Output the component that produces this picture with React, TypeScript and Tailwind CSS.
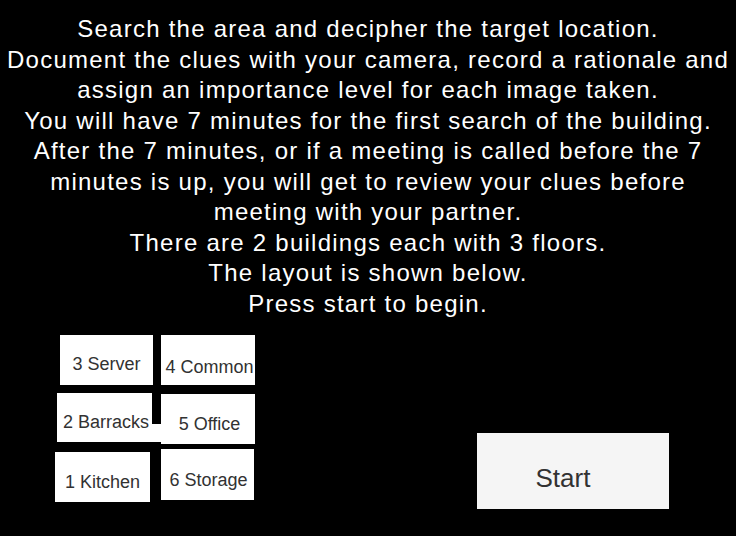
const LINES = [
  "Search the area and decipher the target location.",
  "Document the clues with your camera, record a rationale and",
  "assign an importance level for each image taken.",
  "You will have 7 minutes for the first search of the building.",
  "After the 7 minutes, or if a meeting is called before the 7",
  "minutes is up, you will get to review your clues before",
  "meeting with your partner.",
  "There are 2 buildings each with 3 floors.",
  "The layout is shown below.",
  "Press start to begin.",
];

export default function App() {
  return (
    <div
      className="w-[736px] h-[536px] bg-black overflow-hidden"
      style={{ fontFamily: '"Liberation Sans", Arial, sans-serif' }}
    >
      {/* Instructions */}
      <div className="pt-[14px] text-center text-white text-[24px] leading-[30.5px] tracking-[1.25px]">
        {LINES.map((l) => (
          <div key={l}>{l}</div>
        ))}
      </div>

      <div className="flex mt-[16px]">
        {/* Floor layout */}
        <div className="flex flex-col w-[260px] text-[18px] text-[#323232]">
          <div className="flex">
            <div className="ml-[60px] w-[93px] h-[50px] bg-white flex items-center justify-center pt-[8px]">
              3 Server
            </div>
            <div className="ml-[8px] w-[94px] h-[50px] bg-white flex items-center justify-center pt-[14px] pl-[3px]">
              4 Common
            </div>
          </div>
          <div className="flex mt-[8px]">
            <div className="relative ml-[57px] w-[95px] h-[49px] bg-white flex items-center justify-center pt-[9px] pl-[3px]">
              2 Barracks
              <div className="absolute left-[93px] top-[31px] w-[11px] h-[18px] bg-white" />
            </div>
            <div className="ml-[9px] mt-[1px] w-[94px] h-[50px] bg-white flex items-center justify-center pt-[11px] pl-[3px]">
              5 Office
            </div>
          </div>
          <div className="flex">
            <div className="ml-[55px] mt-[8px] w-[95px] h-[50px] bg-white flex items-center justify-center pt-[10px]">
              1 Kitchen
            </div>
            <div className="ml-[11px] mt-[5px] w-[93px] h-[51px] bg-white flex items-center justify-center pt-[11px] pl-[2px]">
              6 Storage
            </div>
          </div>
        </div>

        {/* Start */}
        <button
          type="button"
          className="ml-[217px] mt-[98px] w-[192px] h-[76px] bg-[#f5f5f5] text-[#323232] text-[26px] flex items-center justify-center pr-[20px] pt-[14px]"
        >
          Start
        </button>
      </div>
    </div>
  );
}
